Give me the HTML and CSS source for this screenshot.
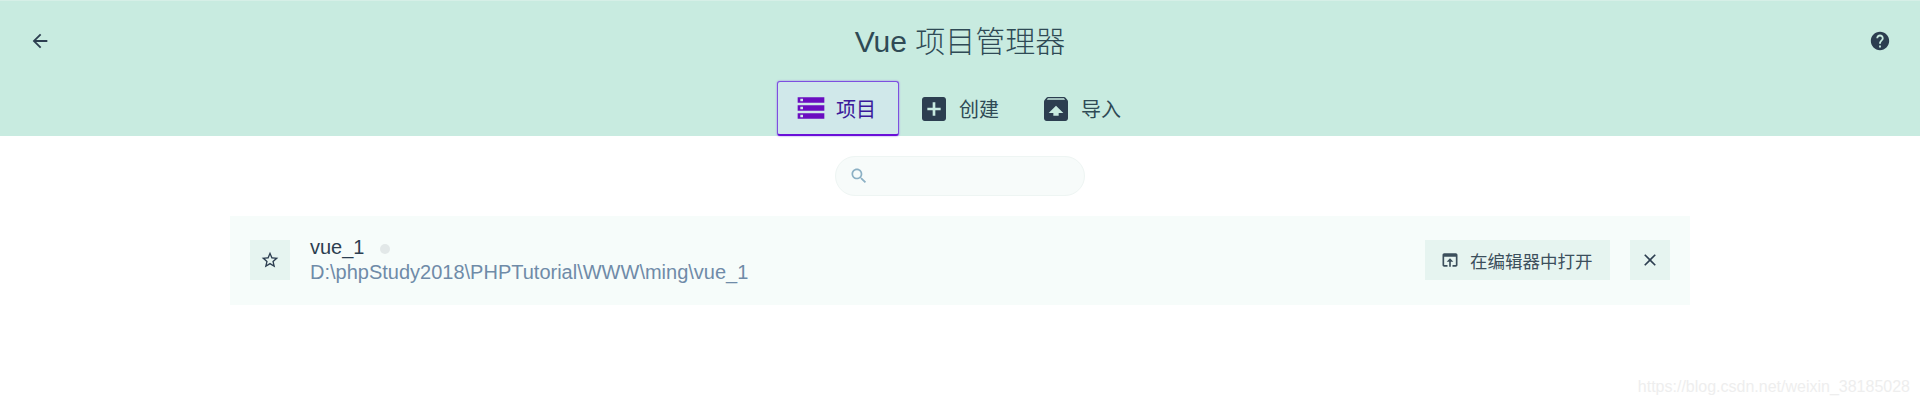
FILE: index.html
```html
<!DOCTYPE html>
<html lang="zh">
  <head>
    <meta charset="utf-8" />
    <title>Vue 项目管理器</title>
    <link rel="stylesheet" href="styles.css">
  </head>
  <body>
    <header class="Top">
      <div class="TopRow">
        <button class="icon-btn">
          <svg width="22" height="22" viewBox="0 0 24 24"><path d="M20 11H7.83l5.59-5.59L12 4l-8 8 8 8 1.41-1.41L7.83 13H20v-2z"/></svg>
        </button>
        <h1>Vue 项目管理器</h1>
        <button class="icon-btn">
          <svg width="22" height="22" viewBox="0 0 24 24"><path d="M12 2C6.48 2 2 6.48 2 12s4.48 10 10 10 10-4.48 10-10S17.52 2 12 2zm1 17h-2v-2h2v2zm2.07-7.75l-.9.92C13.45 12.9 13 13.5 13 15h-2v-.5c0-1.1.45-2.1 1.17-2.83l1.24-1.26c.37-.36.59-.86.59-1.41 0-1.1-.9-2-2-2s-2 .9-2 2H8c0-2.21 1.79-4 4-4s4 1.79 4 4c0 .88-.36 1.68-.93 2.25z"/></svg>
        </button>
      </div>
      <nav class="Tabs">
        <a class="tab selected">
          <svg width="32" height="32" viewBox="0 0 24 24"><path d="M2 20h20v-4H2v4zm2-3h2v2H4v-2zM2 4v4h20V4H2zm4 3H4V5h2v2zm-4 7h20v-4H2v4zm2-3h2v2H4v-2z"/></svg>
          项目
        </a>
        <a class="tab">
          <svg width="32" height="32" viewBox="0 0 24 24"><path d="M19 3H5c-1.11 0-2 .9-2 2v14c0 1.1.89 2 2 2h14c1.1 0 2-.9 2-2V5c0-1.1-.9-2-2-2zm-2 10h-4v4h-2v-4H7v-2h4V7h2v4h4v2z"/></svg>
          创建
        </a>
        <a class="tab">
          <svg width="32" height="32" viewBox="0 0 24 24"><path d="M20.55 5.22l-1.39-1.68C18.88 3.21 18.47 3 18 3H6c-.47 0-.88.21-1.15.55L3.46 5.22C3.17 5.57 3 6.01 3 6.5V19c0 1.1.89 2 2 2h14c1.1 0 2-.9 2-2V6.5c0-.49-.17-.93-.45-1.28zM12 9.5l5.5 5.5H14v2h-4v-2H6.5L12 9.5zM5.12 5l.82-1h12l.93 1H5.12z"/></svg>
          导入
        </a>
      </nav>
    </header>

    <main>
      <div class="Search">
        <svg width="20" height="20" viewBox="0 0 24 24"><path d="M15.5 14h-.79l-.28-.27C15.41 12.59 16 11.11 16 9.5 16 5.91 13.09 3 9.5 3S3 5.91 3 9.5 5.91 16 9.5 16c1.61 0 3.09-.59 4.23-1.57l.27.28v.79l5 4.99L20.49 19l-4.99-5zm-6 0C7.01 14 5 11.99 5 9.5S7.01 5 9.5 5 14 7.01 14 9.5 11.99 14 9.5 14z"/></svg>
      </div>

      <section class="Project">
        <button class="square-btn">
          <svg width="20" height="20" viewBox="0 0 24 24"><path d="M22 9.24l-7.19-.62L12 2 9.19 8.63 2 9.24l5.46 4.73L5.82 21 12 17.27 18.18 21l-1.63-7.03L22 9.24zM12 15.4l-3.76 2.27 1-4.28-3.32-2.88 4.38-.38L12 6.1l1.71 4.04 4.38.38-3.32 2.88 1 4.28L12 15.4z"/></svg>
        </button>
        <div class="info">
          <div class="name">vue_1 <span class="dot"></span></div>
          <div class="path">D:\phpStudy2018\PHPTutorial\WWW\ming\vue_1</div>
        </div>
        <button class="open-btn">
          <svg width="20" height="20" viewBox="0 0 24 24"><path d="M19 4H5c-1.11 0-2 .9-2 2v12c0 1.1.89 2 2 2h4v-2H5V8h14v10h-4v2h4c1.1 0 2-.9 2-2V6c0-1.1-.89-2-2-2zm-7 6l-4 4h3v6h2v-6h3l-4-4z"/></svg>
          在编辑器中打开
        </button>
        <button class="square-btn">
          <svg width="20" height="20" viewBox="0 0 24 24"><path d="M19 6.41L17.59 5 12 10.59 6.41 5 5 6.41 10.59 12 5 17.59 6.41 19 12 13.41 17.59 19 19 17.59 13.41 12z"/></svg>
        </button>
      </section>
    </main>

    <div class="watermark">https://blog.csdn.net/weixin_38185028</div>
  </body>
</html>
```

FILE: styles.css
```css
html, body {
  height: 404px;
  overflow: hidden;
}
body {
  margin: 0;
  position: relative;
  background: #fff;
  color: #2c3e50;
  font-family: "Liberation Sans", "Noto Sans CJK SC", sans-serif;
}
button {
  border: none;
  padding: 0;
  background: none;
  color: inherit;
  font: inherit;
}
svg {
  display: block;
  flex: none;
  fill: currentColor;
}

.Top {
  height: 136px;
  box-sizing: border-box;
  border-top: 1px solid #d6efe7;
  background: #c8ebe0;
}
.TopRow {
  height: 80px;
  padding: 0 29px;
  display: flex;
  align-items: center;
  justify-content: space-between;
}
.TopRow h1 {
  margin: 0 0 5px;
  font-size: 30px;
  font-weight: 300;
  color: #2f4a55;
}
.icon-btn {
  width: 22px;
  height: 22px;
}
.Tabs {
  display: flex;
  justify-content: center;
  margin-left: -1px;
}
.tab {
  height: 55px;
  padding: 0 21px 0 20px;
  box-sizing: border-box;
  display: flex;
  align-items: center;
  gap: 9px;
  font-size: 20px;
  white-space: nowrap;
  color: #2f4a55;
}
.tab svg {
  color: #2c3e50;
}
.tab.selected {
  width: 122px;
  margin-right: -1px;
  padding: 0 0 0 17px;
  border: 1px solid #7d4fe0;
  border-bottom: 2px solid #6a10d8;
  border-radius: 3px;
  background: #d0e8ea;
  box-shadow: 0 0 2px #9a70e8;
  color: #3a1a9a;
}
.tab.selected svg {
  color: #6a0dc0;
}

main {
  display: flex;
  flex-direction: column;
  align-items: center;
}
.Search {
  width: 250px;
  height: 40px;
  margin-top: 20px;
  padding-left: 13px;
  box-sizing: border-box;
  border: 1px solid #eef5f3;
  border-radius: 20px;
  background: #f7fbfa;
  display: flex;
  align-items: center;
  color: #8cb0c4;
}
.Project {
  width: 1460px;
  height: 89px;
  margin-top: 20px;
  padding: 0 20px 1px;
  box-sizing: border-box;
  background: #f6fcfa;
  display: flex;
  align-items: center;
}
.square-btn {
  width: 40px;
  height: 40px;
  background: #e6f4f0;
  display: flex;
  align-items: center;
  justify-content: center;
}
.Project .info {
  flex: 1;
  margin-left: 20px;
}
.Project .name {
  font-size: 20px;
  line-height: 24px;
  color: #2c3e50;
}
.Project .dot {
  display: inline-block;
  width: 10px;
  height: 10px;
  margin-left: 10px;
  border-radius: 50%;
  background: #e2e8e8;
}
.Project .path {
  font-size: 20px;
  line-height: 26px;
  color: #6f8ba8;
}
.open-btn {
  width: 185px;
  height: 40px;
  margin-right: 20px;
  padding-left: 15px;
  box-sizing: border-box;
  background: #e6f4f0;
  display: flex;
  align-items: center;
  gap: 10px;
  font-size: 17.5px;
  color: #3c4f5c;
}

.watermark {
  position: absolute;
  right: 10px;
  bottom: 8px;
  font-size: 16px;
  color: #eeeeee;
}
```
